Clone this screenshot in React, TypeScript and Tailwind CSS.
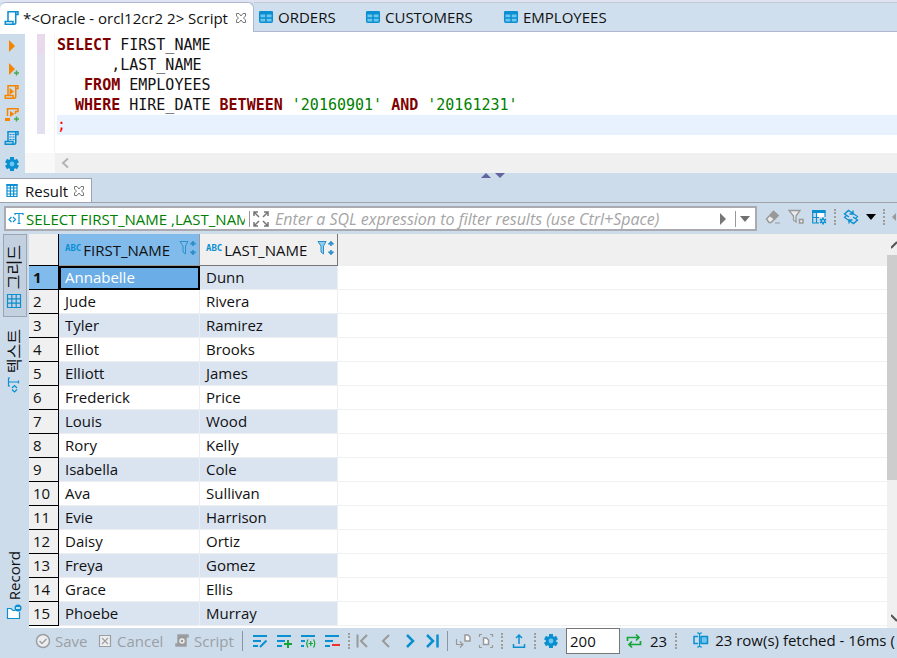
import type { ReactNode } from "react";

const rows = [
  ["Annabelle", "Dunn"],
  ["Jude", "Rivera"],
  ["Tyler", "Ramirez"],
  ["Elliot", "Brooks"],
  ["Elliott", "James"],
  ["Frederick", "Price"],
  ["Louis", "Wood"],
  ["Rory", "Kelly"],
  ["Isabella", "Cole"],
  ["Ava", "Sullivan"],
  ["Evie", "Harrison"],
  ["Daisy", "Ortiz"],
  ["Freya", "Gomez"],
  ["Grace", "Ellis"],
  ["Phoebe", "Murray"],
];

type IconProps = { className?: string; children?: ReactNode };

function Icon({ className = "", children }: IconProps) {
  return (
    <svg viewBox="0 0 16 16" fill="none" stroke="currentColor" strokeWidth="1.5" aria-hidden="true" className={`size-4 shrink-0 ${className}`}>
      {children}
    </svg>
  );
}

function ScriptIcon({ className = "text-[#0a8fd0]", children }: IconProps) {
  return (
    <Icon className={className}>
      <path d="M4 11.500V1.750H14V4.500H11.750M11.750 1.750V12.500Q11.750 14.250 10 14.250H1.250V11.500H9V14" />
      {children}
    </Icon>
  );
}

function TableIcon() {
  return (
    <Icon className="text-[#0a8fd0]">
      <rect x="1.700" y="2.700" width="12.600" height="10.600" rx="1" fill="#6cc6ef" />
      <path d="M1 4H15" strokeWidth="3" />
      <path d="M2 9H14M8 5V13" />
    </Icon>
  );
}

function GridIcon({ className = "text-[#0a8fd0]" }: IconProps) {
  return (
    <Icon className={className}>
      <path d="M1.500 1.500H14.500V14.500H1.500ZM1.500 5.800H14.500M1.500 10.200H14.500M5.800 1.500V14.500M10.200 1.500V14.500" strokeWidth="1.200" />
    </Icon>
  );
}

function ResultIcon() {
  return (
    <Icon className="text-[#0a8fd0]">
      <path d="M3 1.500H13V13.500H3ZM3 5H13M3 8H13M3 11H13M6.400 1.500V13.500M9.700 1.500V13.500" strokeWidth="1.200" />
      <path d="M2.500 2H13.500" strokeWidth="2" />
    </Icon>
  );
}

function TextIcon({ className = "" }: IconProps) {
  return (
    <Icon className={`text-[#0a8fd0] ${className}`}>
      <path d="M3.500 6L1 8.500L3.500 11M5 6L7.500 8.500L5 11M7 4V2.500H15V4M11 2.500V12.500M9.500 12.500H12.500" strokeWidth="1.200" />
    </Icon>
  );
}

function GearIcon() {
  return (
    <Icon className="text-[#0a8fd0]">
      <path d="M8 1V15M2 4.500L14 11.500M2 11.500L14 4.500" strokeWidth="4" />
      <circle cx="8" cy="8" r="4.500" fill="#0a8fd0" />
      <circle cx="8" cy="8" r="2.400" fill="#6cc6ef" stroke="none" />
    </Icon>
  );
}

function CloseIcon() {
  return (
    <svg viewBox="0 0 12 12" fill="none" stroke="#777" className="size-3 shrink-0" aria-hidden="true">
      <path d="M1.500 1.500H4L6 4L8 1.500H10.500V4L8.500 6L10.500 8V10.500H8L6 8L4 10.500H1.500V8L3.500 6L1.500 4Z" />
    </svg>
  );
}

function PlayIcon({ plus = false }: { plus?: boolean }) {
  return (
    <Icon>
      <path d="M5 2L11 8L5 14Z" fill="#f58500" stroke="none" />
      {plus && <path d="M12.500 9.500V14.500M10 12H15" stroke="#4ba84b" />}
    </Icon>
  );
}

function Dots() {
  return <span className="h-4 w-0 shrink-0 border-l-2 border-dotted border-[#a09c98]" />;
}

function Divider() {
  return <span className="h-5 w-px shrink-0 bg-[#8b95a0]" />;
}

function LinesIcon({ children }: IconProps) {
  return (
    <Icon className="text-[#0a8fd0]">
      <path d="M1 3H15M1 8H9M1 13H6" strokeWidth="2" />
      {children}
    </Icon>
  );
}

function IconButton({ label, children, className = "" }: IconProps & { label: string }) {
  return (
    <button type="button" aria-label={label} className={`flex shrink-0 items-center ${className}`}>
      {children}
    </button>
  );
}

function EditorTabs() {
  return (
    <div role="tablist" className="flex h-8 shrink-0 border-t-2 border-[#dfe3f3] bg-[#d0dfee]">
      <button role="tab" aria-selected="true" type="button" className="flex w-[254px] shrink-0 items-center gap-[3px] rounded-t-md border-t border-r border-[#b0b6d0] bg-white pl-1">
        <ScriptIcon />
        <span className="w-[209px] text-left whitespace-nowrap">*&lt;Oracle - orcl12cr2 2&gt; Script</span>
        <CloseIcon />
      </button>
      <div className="flex flex-1 items-center border-t border-b border-t-[#c6cad0] border-b-[#b0b6d0] pl-1">
        <button role="tab" type="button" className="flex w-[107px] items-center gap-1"><TableIcon />ORDERS</button>
        <button role="tab" type="button" className="flex w-[138px] items-center gap-1"><TableIcon />CUSTOMERS</button>
        <button role="tab" type="button" className="flex items-center gap-1"><TableIcon />EMPLOYEES</button>
      </div>
    </div>
  );
}

function Keyword({ children }: { children: ReactNode }) {
  return <b className="text-[#800000]">{children}</b>;
}

function Editor() {
  return (
    <div className="flex shrink-0 bg-white pt-0.5">
      <div className="flex w-[25px] flex-col items-start gap-[7px] bg-[#cddceb] pt-1 pl-1">
        <IconButton label="Execute"><PlayIcon /></IconButton>
        <IconButton label="Execute in new tab"><PlayIcon plus /></IconButton>
        <IconButton label="Execute script">
          <ScriptIcon className="text-[#f58500]"><path d="M5.500 4L10 7.500L5.500 11Z" fill="#f58500" stroke="none" /></ScriptIcon>
        </IconButton>
        <IconButton label="Execute statements">
          <Icon className="text-[#f58500]">
            <path d="M3.500 9V1.750H14V4.500H11.500V7" />
            <path d="M1 12.500H6" strokeWidth="3" />
            <path d="M6 4L10.500 7L6 10Z" fill="#f58500" stroke="none" />
            <path d="M12.500 9.500V14.500M10 12H15" stroke="#4ba84b" />
          </Icon>
        </IconButton>
        <IconButton label="Explain plan">
          <ScriptIcon><path d="M5.500 4.500H10.500M5.500 7H10.500M5.500 9.500H10.500" strokeWidth="1" strokeDasharray="2 1" /></ScriptIcon>
        </IconButton>
        <IconButton label="Settings" className="mt-[3px]"><GearIcon /></IconButton>
      </div>
      <div className="min-w-0 flex-1">
        <div className="flex h-[119px]">
          <div className="h-[100px] w-5 pl-3">
            <div className="h-5 w-2 bg-[#ead8ec]" />
            <div className="h-20 w-2 bg-[#e2e0f0]" />
          </div>
          <pre className="ml-[9px] flex-1 border-l border-[#f2f2f2] pl-0.5 font-['DejaVu_Sans_Mono','Liberation_Mono',monospace] text-[15px] leading-5">
            <div className="pt-px"><Keyword>SELECT</Keyword> FIRST_NAME</div>
            <div>{"      ,LAST_NAME"}</div>
            <div>{"   "}<Keyword>FROM</Keyword> EMPLOYEES</div>
            <div>{"  "}<Keyword>WHERE</Keyword> HIRE_DATE <Keyword>BETWEEN</Keyword> <span className="text-[#008000]">'20160901'</span> <Keyword>AND</Keyword> <span className="text-[#008000]">'20161231'</span></div>
            <div className="bg-[#e8f2fe] text-[#ff0000]">;</div>
          </pre>
        </div>
        <div className="flex h-5 bg-[#f8f8f8]">
          <div className="ml-[30px] flex flex-1 items-center bg-[#f0f0f0] pl-1">
            <svg viewBox="0 0 12 12" className="size-3" fill="none" stroke="#b4b4b4" strokeWidth="2" aria-hidden="true"><path d="M9 1.500L4 6L9 10.500" /></svg>
          </div>
        </div>
      </div>
    </div>
  );
}

function Sash() {
  return (
    <div className="flex h-[5px] shrink-0 justify-center gap-1 pl-[88px]">
      <svg viewBox="0 0 10 5" className="h-[5px] w-2.5" fill="#62639f" aria-hidden="true"><path d="M0 5L5 0L10 5Z" /></svg>
      <svg viewBox="0 0 10 5" className="h-[5px] w-2.5" fill="#62639f" aria-hidden="true"><path d="M0 0L5 5L10 0Z" /></svg>
    </div>
  );
}

function FilterBar() {
  return (
    <div className="flex h-[31px] shrink-0 items-center gap-2 overflow-hidden pl-1">
      <div className="flex h-[25px] min-w-0 flex-1 items-center border-2 border-[#a9abb0] bg-white">
        <TextIcon className="ml-0.5" />
        <span className="ml-0.5 w-[219px] shrink-0 overflow-hidden whitespace-nowrap text-[#008000]">SELECT FIRST_NAME ,LAST_NAM</span>
        <span className="mr-[3px] ml-1 h-4 w-px bg-[#999]" />
        <Icon className="text-[#777]">
          <path d="M1 5V1H5M1 1L6 6M11 1H15V5M15 1L10 6M1 11V15H5M1 15L6 10M15 11V15H11M15 15L10 10" />
        </Icon>
        <input aria-label="Filter expression" placeholder="Enter a SQL expression to filter results (use Ctrl+Space)" className="ml-1.5 min-w-0 flex-1 text-base leading-5 italic outline-none placeholder:text-[#a5a5a5]" />
        <IconButton label="Apply filter">
          <svg viewBox="0 0 8 12" className="h-3 w-2" fill="#777"><path d="M1 0L7 6L1 12Z" /></svg>
        </IconButton>
        <span className="mr-1 ml-2 h-4 w-px bg-[#999]" />
        <IconButton label="Filter history" className="mr-[5px]">
          <svg viewBox="0 0 10 6" className="h-1.5 w-2.5" fill="#707070"><path d="M0 0H10L5 6Z" /></svg>
        </IconButton>
      </div>
      <div className="flex w-[132px] shrink-0 items-center gap-[7px] overflow-hidden pb-1">
        <IconButton label="Clear filter">
          <Icon className="text-[#999]"><path d="M1.500 10L8.500 2.500L13 6.500L6 13.500H4Z" fill="#eee" /><path d="M5 6.500L8.500 2.500L13 6.500L9.500 10Z" fill="#999" /><path d="M10 14H15" strokeWidth="1" /></Icon>
        </IconButton>
        <IconButton label="Custom filter">
          <Icon className="text-[#999]"><path d="M1 1.500H12L8 7V13L5.500 11V7Z" fill="#e8eaec" strokeWidth="1.300" /><path d="M11.500 10.500H15V14H11.500Z" fill="#eee" /></Icon>
        </IconButton>
        <IconButton label="Configure columns">
          <Icon className="text-[#0a8fd0]">
            <path d="M5.500 3H14V8H5.500Z" fill="#fff" stroke="none" />
            <path d="M14 2V8M1.700 2V14H8M5.500 2V14M1.700 8.500H8" strokeWidth="1.200" />
            <path d="M1 2.500H14.600" strokeWidth="3" />
            <path d="M12 8.500V15.500M9 10.200L15 13.800M9 13.800L15 10.200" strokeWidth="1.800" />
            <circle cx="12" cy="12" r="1" fill="#cddceb" stroke="none" />
          </Icon>
        </IconButton>
        <Dots />
        <IconButton label="Refresh">
          <Icon className="text-[#0a8fd0]">
            <path d="M6 8L1.500 5L5.500 1.500L10 4.500M10 1.500V5H6.500" strokeWidth="1.400" />
            <path d="M10 8L14.500 11L10.500 14.500L6 11.500M6 14.500V11H9.500" strokeWidth="1.400" />
            <path d="M10 4.500L14.500 7.500L12.500 9.500M6 11.500L1.500 8.500L3.500 6.500" strokeWidth="1.200" />
          </Icon>
        </IconButton>
        <IconButton label="Refresh options"><svg viewBox="0 0 10 6" className="h-1.5 w-2.5" fill="#000"><path d="M0 0H10L5 6Z" /></svg></IconButton>
        <Dots />
        <IconButton label="Back"><svg viewBox="0 0 4 8" className="h-2 w-1" fill="#999"><path d="M0 4L4 0V8Z" /></svg></IconButton>
      </div>
    </div>
  );
}

function ColumnHeader({ name, selected = false }: { name: string; selected?: boolean }) {
  return (
    <th scope="col" className={`border-r border-b p-0 font-normal ${selected ? "border-[#999] bg-[#80bbec]" : "border-[#777] bg-[#f0f0f0]"}`}>
      <div className="flex items-center pl-1.5">
        <span className="mb-1 font-['DejaVu_Sans_Mono',monospace] text-[9px] leading-3 font-bold text-[#0a8fd0]">ABC</span>
        <span className="ml-0.5 flex-1 text-left">{name}</span>
        <svg viewBox="0 0 18 16" className="mr-0.5 mb-1 h-4 w-[18px]" fill="none" stroke="#2b8fca" aria-hidden="true">
          <path d="M1 1.500H9L6.500 6V14L4 12V6Z" fill={selected ? "none" : "#8fcdf0"} />
          <path d="M14 2V6M14 10V14M11.500 4.500L14 2L16.500 4.500M11.500 11.500L14 14L16.500 11.500" strokeWidth="1.700" />
        </svg>
      </div>
    </th>
  );
}

function ResultGrid() {
  return (
    <div className="flex min-w-0 flex-1 bg-white">
      <div className="min-w-0 flex-1 overflow-hidden">
        <table className="w-full table-fixed border-separate border-spacing-0">
          <colgroup>
            <col className="w-[30px]" />
            <col className="w-[141px]" />
            <col className="w-[138px]" />
            <col />
          </colgroup>
          <thead>
            <tr className="h-8">
              <td className="border-r border-b border-black bg-[#f0f0f0] p-0" />
              <ColumnHeader name="FIRST_NAME" selected />
              <ColumnHeader name="LAST_NAME" />
              <td className="bg-[#f0f0f0] p-0" />
            </tr>
          </thead>
          <tbody>
            {rows.map(([first, last], i) => (
              <tr key={i} className="h-6 leading-5">
                <th scope="row" className={`border-r border-b border-black px-1 pt-0 pb-0.5 text-left ${i === 0 ? "bg-[#80bbec] font-bold" : "bg-[#f0f0f0] font-normal"}`}>
                  {i + 1}
                </th>
                {i === 0 ? (
                  <td className="border-2 border-black bg-[#6bade6] px-1 py-0 text-white"><div className="-my-px pb-0.5">{first}</div></td>
                ) : (
                  <td className={`border-r border-b border-[#eceef2] px-1.5 pt-0 pb-0.5 ${i % 2 === 0 ? "bg-[#dae4f1]" : ""}`}>{first}</td>
                )}
                <td className={`border-r border-b border-[#eceef2] px-1.5 pt-0 pb-0.5 ${i % 2 === 0 ? "bg-[#dae4f1]" : ""}`}>{last}</td>
                <td className="border-b border-[#f0f0f0] p-0" />
              </tr>
            ))}
          </tbody>
        </table>
      </div>
      <div className="flex w-2.5 shrink-0 flex-col items-end justify-between overflow-hidden bg-[#f0f0f0]">
        <svg viewBox="0 0 6 21" className="h-[21px] w-1.5 shrink-0" fill="none" stroke="#555" strokeWidth="2" aria-hidden="true"><path d="M0 14L6 8" /></svg>
        <div className="h-[225px] w-2.5 bg-[#cdcdcd]" />
        <div className="flex-1" />
        <svg viewBox="0 0 6 21" className="h-[21px] w-1.5 shrink-0" fill="none" stroke="#555" strokeWidth="2" aria-hidden="true"><path d="M0 8L6 14" /></svg>
      </div>
    </div>
  );
}

function SideTabs() {
  const vertical = "rotate-180 leading-5 [text-orientation:sideways] [writing-mode:vertical-rl]";
  return (
    <div className="flex w-[29px] shrink-0 flex-col items-start pl-[3px]">
      <button type="button" className="flex h-[83px] w-6 flex-col items-center justify-end gap-1 border border-[#9da5b0] bg-[#c3d0df] pr-0.5 pb-[7px]">
        <span className={`text-base ${vertical}`}>그리드</span>
        <GridIcon />
      </button>
      <button type="button" className="mt-3 flex w-[22px] flex-col items-center gap-1">
        <span className={`text-base ${vertical}`}>텍스트</span>
        <TextIcon className="-rotate-90" />
      </button>
      <div className="flex-1" />
      <button type="button" className="mb-2 flex w-[22px] flex-col items-center gap-1">
        <span className={vertical}>Record</span>
        <Icon className="text-[#0a8fd0]">
          <path d="M1.500 4V14.500H13.500V8M1 4.500H5L7 6.500H9" fill="#fff" strokeWidth="1.200" />
          <circle cx="12" cy="4" r="3.500" fill="#0a8fd0" stroke="none" />
          <path d="M10 4H14" stroke="#fff" />
        </Icon>
      </button>
    </div>
  );
}

function StatusBar() {
  return (
    <div className="flex h-[30px] shrink-0 items-center overflow-hidden pb-1 pl-[35px] whitespace-nowrap">
      <button type="button" disabled className="flex w-[62px] shrink-0 items-center gap-1 text-[#9a9fa5]">
        <Icon><circle cx="8" cy="8" r="6.500" fill="#eee" /><path d="M4.500 8L7 10.500L11.500 6" /></Icon>Save
      </button>
      <button type="button" disabled className="flex w-[77px] shrink-0 items-center gap-1 text-[#9a9fa5]">
        <Icon><path d="M2.500 2.500H13.500V13.500H2.500Z" fill="#eee" strokeWidth="1.200" /><path d="M5 5L11 11M11 5L5 11" strokeWidth="1.200" /></Icon>Cancel
      </button>
      <button type="button" disabled className="flex w-[68px] shrink-0 items-center gap-1 text-[#9a9fa5]">
        <Icon><path d="M4 2H14V4H12V13H2V11H4Z" fill="#999" /><circle cx="8" cy="8" r="2" stroke="#eee" /></Icon>Script
      </button>
      <Divider />
      <div className="ml-[9px] flex shrink-0 items-center gap-2">
        <IconButton label="Edit cell"><LinesIcon><path d="M8 14L14.500 7.500" strokeWidth="2" /></LinesIcon></IconButton>
        <IconButton label="Add row"><LinesIcon><path d="M12 7V15M8 11H16" stroke="#13a538" strokeWidth="2" /></LinesIcon></IconButton>
        <IconButton label="Duplicate row">
          <Icon className="text-[#0a8fd0]">
            <path d="M1 3H15M1 8H5M1 13H4" strokeWidth="2" />
            <path d="M8 6.500Q5.500 10.500 8 14.500M13.500 6.500Q16 10.500 13.500 14.500M10.750 8V13M8.500 10.500H13" stroke="#13a538" strokeWidth="1.200" />
          </Icon>
        </IconButton>
        <IconButton label="Delete row"><LinesIcon><path d="M8 12H16" stroke="#ef3030" strokeWidth="2" /></LinesIcon></IconButton>
        <Dots />
      </div>
      <div className="ml-[5px] flex shrink-0 items-center gap-[7px]">
        <IconButton label="First row" className="text-[#999]"><Icon><path d="M2.500 1.500V14.500M12 2L6 8L12 14" strokeWidth="2" /></Icon></IconButton>
        <IconButton label="Previous row" className="text-[#999]"><Icon><path d="M11 2L5 8L11 14" strokeWidth="2" /></Icon></IconButton>
        <IconButton label="Next row" className="text-[#0a8fd0]"><Icon><path d="M6 2L12 8L6 14" strokeWidth="2.500" /></Icon></IconButton>
        <IconButton label="Last row" className="text-[#0a8fd0]"><Icon><path d="M3 2L9 8L3 14M13.500 1.500V14.500" strokeWidth="2.500" /></Icon></IconButton>
        <Divider />
        <IconButton label="Fetch next page" className="text-[#999]"><Icon><path d="M1.500 6V11.500H7M5 8.500L8 11.500L5 14.500" strokeWidth="1.200" /><path d="M10 2H13L15 4V8H10Z" fill="#fff" /></Icon></IconButton>
        <IconButton label="Fetch all" className="text-[#999]"><Icon><path d="M4 1.500H1.500V4M12 1.500H14.500V4M4 14.500H1.500V12M12 14.500H14.500V12" strokeWidth="1.200" /><path d="M5.500 5H8.500L10.500 7V11.500H5.500Z" fill="#fff" /></Icon></IconButton>
        <Dots />
        <IconButton label="Export data" className="ml-px text-[#0a8fd0]"><Icon><path d="M8 11V2M5 5L8 2L11 5M2.500 11V14.300H13.500V11" /></Icon></IconButton>
        <Dots />
        <IconButton label="Settings"><GearIcon /></IconButton>
      </div>
      <input aria-label="Fetch size" defaultValue="200" className="ml-[7px] h-[26px] w-[54px] shrink-0 border border-[#777] bg-white px-[3px]" />
      <div className="ml-1.5 flex shrink-0 items-center gap-2">
        <IconButton label="Row count" className="text-[#13a538]"><Icon><path d="M1.500 8V4.500H12M10 1.500L13 4.500L10 7.500M14.500 8V11.500H4M6 8.500L3 11.500L6 14.500" strokeWidth="1.700" /></Icon></IconButton>
        <span>23</span>
        <Dots />
      </div>
      <div className="ml-4 flex shrink-0 items-center gap-1.5 pb-0.5">
        <Icon className="text-[#0a8fd0]"><path d="M5 4.500H1V11.500H5" /><path d="M8 4.500H14.500V11.500H8Z" fill="#6cc6ef" /><path d="M6.500 2V14M4 1H5.500L6.500 2L7.500 1H9M4 15H5.500L6.500 14L7.500 15H9" strokeWidth="1.200" /></Icon>
        <span>23 row(s) fetched - 16ms (</span>
      </div>
    </div>
  );
}

export default function App() {
  return (
    <div className="flex h-screen flex-col overflow-hidden bg-[#cddceb] font-['Open_Sans','Noto_Sans_CJK_KR',sans-serif] text-[15px] leading-5 text-[#111]">
      <EditorTabs />
      <Editor />
      <Sash />
      <div role="tablist" className="flex h-[25px] shrink-0 border-b border-[#a0a4aa]">
        <button role="tab" aria-selected="true" type="button" className="flex w-[92px] items-center gap-[5px] border-t border-r border-[#a0a4aa] bg-white pl-1">
          <ResultIcon />Result<CloseIcon />
        </button>
      </div>
      <FilterBar />
      <div className="flex min-h-0 flex-1">
        <SideTabs />
        <ResultGrid />
      </div>
      <StatusBar />
    </div>
  );
}
